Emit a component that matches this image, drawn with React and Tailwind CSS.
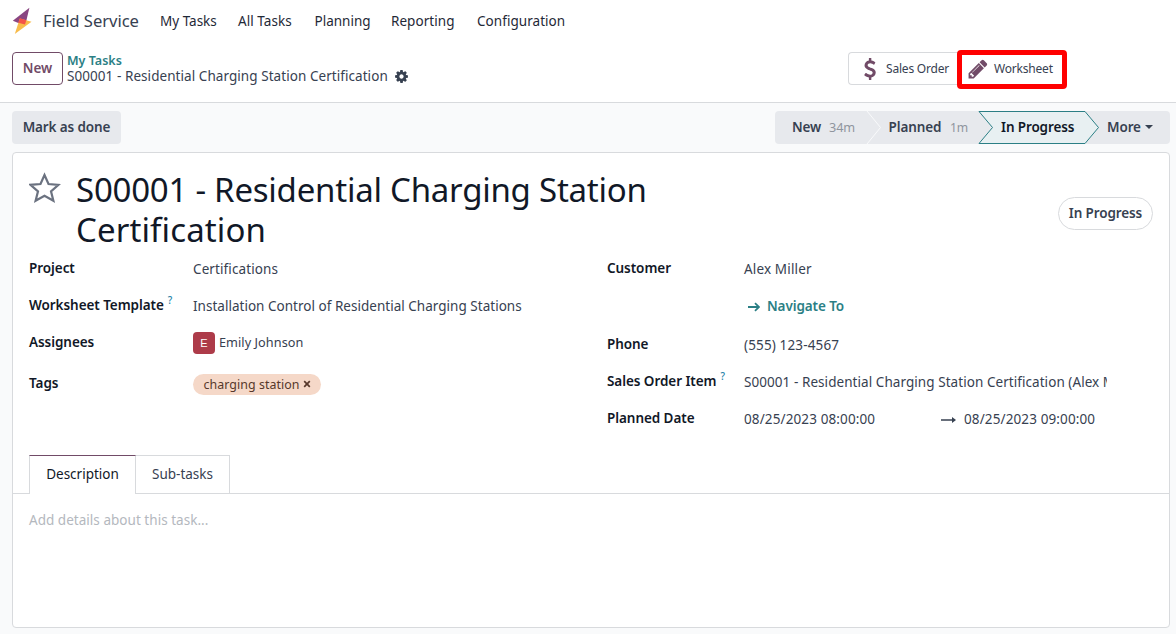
const PENCIL = 'M491 1536l91-91-235-235-91 91v107h128v128h107zm523-928q0-22-22-22-10 0-17 7l-542 542q-7 7-7 17 0 22 22 22 10 0 17-7l542-542q7-7 7-17zm-54-192l416 416-832 832h-416v-416l832-832zm683 96q0 53-37 90l-166 166-416-416 166-165q36-38 90-38 53 0 91 38l235 234q37 39 37 91z';
const COG = 'M1152 896q0-106-75-181t-181-75-181 75-75 181 75 181 181 75 181-75 75-181zm512-109v222q0 12-8 23t-20 13l-185 28q-19 54-39 91 35 50 107 138 10 12 10 25t-9 23q-27 37-99 108t-94 71q-12 0-26-9l-138-108q-44 23-91 38-16 136-29 186-7 28-36 28h-222q-14 0-24.5-8.5t-11.5-21.5l-28-184q-49-16-90-37l-141 107q-10 9-25 9-14 0-25-11-126-114-165-168-7-10-7-23 0-12 8-23 15-21 51-66.5t54-70.5q-27-50-41-99l-183-27q-13-2-21-12.5t-8-23.5v-222q0-12 8-23t19-13l186-28q14-46 39-92-40-57-107-138-10-12-10-24 0-10 9-23 26-36 98.5-107.5t94.5-71.5q13 0 26 10l138 107q44-23 91-38 16-136 29-186 7-28 36-28h222q14 0 24.5 8.5t11.5 21.5l28 184q49 16 90 37l142-107q9-9 24-9 13 0 25 10 129 119 165 170 7 8 7 22 0 12-8 23-15 21-51 66.5t-54 70.5q26 50 41 98l183 28q13 2 21 12.5t8 23.5z';
const DOLLAR = 'M1362 1185q0 153-99.5 263.5t-258.5 136.5v175q0 14-9 23t-23 9h-135q-13 0-22.5-9.5t-9.5-22.5v-175q-66-9-127.5-31t-101.5-44.5-74-48-46.5-37.5-17.5-18q-17-21-2-41l103-135q7-10 23-12 15-2 24 9l2 2q113 99 243 125 37 8 74 8 81 0 142.5-43t61.5-122q0-28-15-53t-33.5-42-58.5-37.5-66-32-80-32.5q-39-16-61.5-25t-61.5-26.5-62.5-31-56.5-35.5-53.5-42.5-43.5-49-35.5-58-21-66.5-8.5-78q0-138 98-242t255-134v-180q0-13 9.5-22.5t22.5-9.5h135q14 0 23 9t9 23v176q57 6 110.5 23t87 33.5 63.5 37.5 39 29 15 14q17 18 5 38l-81 146q-8 15-23 16-14 3-27-7-3-3-14.5-12t-39-26.5-58.5-32-74.5-26-85.5-11.5q-95 0-155 43t-60 111q0 26 8.5 48t29.5 41.5 39.5 33 56 31 60.5 27 70 27.5q53 20 81 31.5t76 35 75.5 42.5 62 50 53 63.5 31.5 76.5 13 94z';

function Glyph({ d, className }) {
  return (
    <svg viewBox="0 0 1792 1792" className={className} fill="currentColor" aria-hidden="true">
      <path d={d} />
    </svg>
  );
}

function Label({ children, help, className = '' }) {
  return (
    <div className={`shrink-0 font-semibold tracking-[-0.06px] text-[#111827] ${className}`}>
      {children}
      {help && <sup className="relative -top-1.5 ml-1 text-[10px] font-medium leading-none text-[#2783a8]">?</sup>}
    </div>
  );
}

function Row({ label, help, height, labelWidth, children }) {
  return (
    <div className={`flex ${height}`}>
      <Label help={help} className={labelWidth}>{label}</Label>
      <div className="flex min-w-0 flex-1 items-start pt-px">{children}</div>
    </div>
  );
}

function Navbar() {
  return (
    <nav className="flex h-[42px] items-center pl-3 text-[#1f2937]">
      <svg viewBox="0 0 20 28" className="h-7 w-5" aria-hidden="true">
        <path d="M17.4 0.800 L0.800 13.800 L6.300 16 L13.500 17.200 Z" fill="#8a4682" />
        <path d="M7.800 11.500 L19.500 14.800 L2.800 27 Z" fill="#f8bc4c" />
        <path d="M8 11.200 L14.300 13.200 L13 17.400 L6.300 15.800 Z" fill="#f4534a" />
      </svg>
      <span className="-mt-0.5 ml-[11px] w-[117px] text-[16.6px] tracking-[-0.04px] text-[#374151]">Field Service</span>
      <span className="w-[78px]">My Tasks</span>
      <span className="w-[76.500px] tracking-[0.05px]">All Tasks</span>
      <span className="w-[76.500px]">Planning</span>
      <span className="w-[86px] tracking-[0.05px]">Reporting</span>
      <span className="tracking-[0.05px]">Configuration</span>
    </nav>
  );
}

function ControlPanel() {
  return (
    <header className="flex h-[61px] items-start border-b border-[#d8dadd] pl-3 pt-[10px]">
      <button className="h-[33px] w-[51px] rounded border border-[#714b67] font-semibold text-[#714b67]">New</button>
      <div className="ml-1 flex w-[781px] flex-col">
        <a className="h-4 text-[12.5px] font-semibold leading-[18px] text-[#2b7f85]">My Tasks</a>
        <div className="flex h-4 items-center leading-4 tracking-[0.06px]">
          <span className="w-[327px]">S00001 - Residential Charging Station Certification</span>
          <Glyph d={COG} className="size-[15px]" />
        </div>
      </div>
      <div className="flex h-[33px] text-[12px] tracking-[-0.2px]">
        <button className="flex w-[110px] items-center rounded-l border border-r-0 border-[#d8dadd] pl-[10px]">
          <Glyph d={DOLLAR} className="size-[22px] text-[#714b67]" />
          <span className="ml-[5px] whitespace-nowrap">Sales Order</span>
        </button>
        <button className="-mt-[2px] -ml-[1px] flex h-[39px] w-[110px] items-center rounded-[4px] border-[5px] border-[#ff0000] pl-[5px] pb-0.5">
          <Glyph d={PENCIL} className="size-[22px] text-[#714b67]" />
          <span className="ml-[5px]">Worksheet</span>
        </button>
      </div>
    </header>
  );
}

function StatusBar() {
  return (
    <div className="flex h-[49px] items-center justify-between pl-3 pr-[6px] font-semibold tracking-[-0.12px]">
      <button className="h-[33px] w-[109px] rounded bg-[#e7e9ed]">Mark as done</button>
      <div className="relative flex h-[33px] w-[395px] items-center overflow-hidden rounded bg-[#e7e9ed]">
        <svg viewBox="0 0 395 33" className="absolute inset-0 h-[33px] w-[395px]" aria-hidden="true">
          <path d="M92 0 L105.500 16.500 L92 33" fill="none" stroke="#f9fafb" />
          <path d="M204 .5 H310 L323.500 16.500 L310 32.500 H204 L217.500 16.500 Z" fill="#e8f0f2" stroke="#2b7f85" strokeWidth="1" />
        </svg>
        <span className="relative ml-[17px] w-[37px]">New</span>
        <span className="relative w-[59.500px] text-[12.7px] font-normal text-[#8f959e]">34m</span>
        <span className="relative w-[61.500px]">Planned</span>
        <span className="relative w-[51px] text-[12.2px] font-normal text-[#8f959e]">1m</span>
        <span className="relative w-[106px] text-[#111827]">In Progress</span>
        <span className="relative">More</span>
        <span className="relative ml-1 -mt-0.5 border-x-4 border-t-4 border-x-transparent border-t-[#374151]" />
      </div>
    </div>
  );
}

export default function App() {
  return (
    <div className="h-[634px] w-[1176px] overflow-hidden bg-white font-['Noto_Sans','Open_Sans',sans-serif] text-[13.5px] leading-[21px] text-[#374151]">
      <Navbar />
      <ControlPanel />
      <main className="h-[531px] bg-[#f9fafb]">
        <StatusBar />
        <section className="ml-3 mr-[6px] h-[476px] rounded border border-[#d8dadd] bg-white">
          <div className="flex h-[105px] pl-4">
            <svg viewBox="0 0 32 32" className="mt-[19px] size-8" aria-hidden="true">
              <path d="M15.500 3 L19.500 12 L29.500 12.800 L22 19.300 L24.400 28.800 L15.500 23.800 L6.600 28.800 L9 19.300 L1.500 12.800 L11.500 12 Z" fill="none" stroke="#6b7280" strokeWidth="2.200" />
            </svg>
            <h1 className="ml-[15px] mt-[17px] w-[600px] text-[33px] leading-10 tracking-[-0.24px] text-[#111827]">
              S00001 - Residential Charging Station <span className="tracking-[0.12px]">Certification</span>
            </h1>
            <span className="ml-auto mr-4 mt-11 flex h-[33px] w-[95px] items-center justify-center rounded-full border border-[#d8dadd] font-semibold tracking-[-0.12px]">In Progress</span>
          </div>
          <div className="flex h-[197px] pl-4 tracking-[0.06px]">
            <div className="w-[578px]">
              <Row label="Project" height="h-[37px]" labelWidth="w-[164px]"><span className="tracking-[0.1px]">Certifications</span></Row>
              <Row label="Worksheet Template" help height="h-[37px]" labelWidth="w-[164px]"><span className="tracking-[0.02px]">Installation Control of Residential Charging Stations</span></Row>
              <Row label="Assignees" height="h-[41px]" labelWidth="w-[164px]">
                <span className="-mt-px flex size-[22px] items-center justify-center rounded bg-[#ad3b49] font-['Liberation_Sans',sans-serif] text-[11px] text-white">E</span>
                <span className="-mt-px ml-1 text-[12.7px]">Emily Johnson</span>
              </Row>
              <Row label="Tags" height="h-[37px]" labelWidth="w-[164px]">
                <span className="flex h-[21px] w-[128px] items-center rounded-full bg-[#f5d8c8] pl-[10.500px] text-[12.4px] text-[#57382b]">
                  <span className="w-[99.500px]">charging station</span>
                  <svg viewBox="0 0 8 8" className="mb-0.5 size-2" aria-hidden="true"><path d="M1.200 1.200L6.800 6.800M6.800 1.200L1.200 6.800" stroke="currentColor" strokeWidth="1.700" /></svg>
                </span>
              </Row>
            </div>
            <div className="w-[500px]">
              <Row label="Customer" height="h-[38px]" labelWidth="w-[137px]"><span className="tracking-[0.15px]">Alex Miller</span></Row>
              <Row label="" height="h-[38px]" labelWidth="w-[137px]">
                <a className="-mt-px flex items-center font-semibold tracking-[-0.1px] text-[#2b7f85]">
                  <svg viewBox="0 0 12 12" className="ml-1 mr-[7px] size-3" aria-hidden="true"><path d="M0 6H11M7 2.200L11 6L7 9.800" fill="none" stroke="currentColor" strokeWidth="1.800" /></svg>
                  Navigate To
                </a>
              </Row>
              <Row label="Phone" height="h-[37px]" labelWidth="w-[137px]"><span className="tracking-[0.14px]">(555) 123-4567</span></Row>
              <Row label="Sales Order Item" help height="h-[37px]" labelWidth="w-[137px]">
                <span className="w-[363px] overflow-hidden whitespace-nowrap">S00001 - Residential Charging Station Certification (Alex Miller)</span>
              </Row>
              <Row label="Planned Date" height="h-[37px]" labelWidth="w-[137px]">
                <span className="w-[197px] tracking-[0.12px]">08/25/2023 08:00:00</span>
                <svg viewBox="0 0 15 12" className="mr-2 mt-[5px] h-3 w-[15px]" aria-hidden="true"><path d="M0 6H13" stroke="currentColor" strokeWidth="1.500" /><path d="M11 3L15 6L11 9Z" fill="currentColor" /></svg>
                <span className="tracking-[0.12px]">08/25/2023 09:00:00</span>
              </Row>
            </div>
          </div>
          <div className="flex h-[39px] items-stretch">
            <div className="w-4 border-b border-[#d8dadd]" />
            <div className="flex w-[107px] items-center justify-center border-x border-t border-x-[#d8dadd] border-t-[#714b67] pb-px text-[#111827]">Description</div>
            <div className="flex w-[94px] items-center justify-center border-y border-r border-[#d8dadd]">Sub-tasks</div>
            <div className="flex-1 border-b border-[#d8dadd]" />
          </div>
          <p className="pl-4 pt-4 tracking-[0.03px] text-[#b4b8be]">Add details about this task...</p>
        </section>
      </main>
    </div>
  );
}
